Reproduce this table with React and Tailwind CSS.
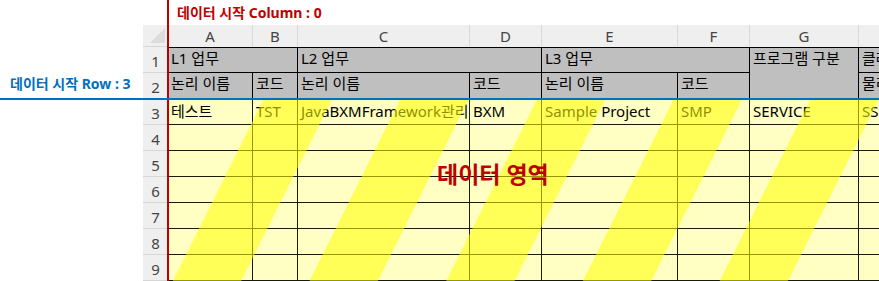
const font = { fontFamily: '"Noto Sans", "Noto Sans CJK KR", sans-serif' };

const letters = ["A", "B", "C", "D", "E", "F", "G", "H"];
const letterCols = [
  "col-start-3",
  "col-start-4",
  "col-start-5",
  "col-start-6",
  "col-start-7",
  "col-start-8",
  "col-start-9",
  "col-start-10",
];
const rowStarts = [
  "row-start-3",
  "row-start-4",
  "row-start-5",
  "row-start-6",
  "row-start-7",
  "row-start-8",
  "row-start-9",
  "row-start-10",
  "row-start-11",
];

const firstRow = [
  { text: "테스트" },
  { text: "TST" },
  { text: "JavaBXMFramework관리" },
  { text: "BXM" },
  { text: "Sample Project" },
  { text: "SMP" },
  { text: "SERVICE" },
  { text: "SSERVICE" },
];

const head = "bg-[#bfbfbf] border-r border-b border-black text-black px-[3px] leading-[20px] whitespace-nowrap overflow-hidden";

export default function App() {
  // stripes: 5 parallelograms, period 136.7, width 68.3
  const stripes = [0, 1, 2, 3, 4].map((k) => {
    const o = 136.7 * k;
    return `${96.3 + o},0 ${164.6 + o},0 ${74.1 + o},181 ${5.8 + o},181`;
  });

  return (
    <div
      className="relative w-[879px] h-[281px] overflow-hidden bg-white text-[15px]"
      style={font}
    >
      <div className="grid w-max grid-cols-[143px_25px_85px_45px_172px_72px_136px_72px_109px_110px] grid-rows-[25px_22px_repeat(9,26px)]">
        {/* top label */}
        <div className="col-start-3 col-span-8 row-start-1 flex items-center pl-[9px] text-[14px] font-bold text-[#c00000] whitespace-nowrap">
          데이터 시작 Column : 0
        </div>

        {/* left label */}
        <div className="col-start-1 row-start-3 row-span-2 flex items-end pb-[5px] pl-[10px] text-[14px] font-bold text-[#0070c0] whitespace-nowrap">
          데이터 시작 Row : 3
        </div>

        {/* corner */}
        <div className="col-start-2 row-start-2 bg-[#efefef] border-b border-[#d6d6d6] relative">
          <svg className="absolute inset-0" width="25" height="22">
            <polygon points="7,18 22,3 22,18" fill="#dcdcdc" />
          </svg>
        </div>

        {/* column letters */}
        {letters.map((l, i) => (
          <div
            key={l}
            className={`${letterCols[i]} row-start-2 bg-[#efefef] border-r border-[#d9d9d9] text-center text-[#444] leading-[22px]`}
          >
            {l}
          </div>
        ))}

        {/* row numbers */}
        {rowStarts.map((r, i) => (
          <div
            key={r}
            className={`col-start-2 ${r} bg-[#efefef] border-b border-[#d6d6d6] text-center text-[#444] leading-[26px] pt-[1px]`}
          >
            {i + 1}
          </div>
        ))}

        {/* header row 1 */}
        <div className={`col-start-3 col-span-2 row-start-3 border-t ${head}`}>L1 업무</div>
        <div className={`col-start-5 col-span-2 row-start-3 border-t ${head}`}>L2 업무</div>
        <div className={`col-start-7 col-span-2 row-start-3 border-t ${head}`}>L3 업무</div>
        <div className={`col-start-9 row-start-3 row-span-2 border-t ${head}`}>프로그램 구분</div>
        <div className={`col-start-10 row-start-3 border-t ${head}`}>클래스 구분</div>

        {/* header row 2 */}
        <div className={`col-start-3 row-start-4 ${head}`}>논리 이름</div>
        <div className={`col-start-4 row-start-4 ${head}`}>코드</div>
        <div className={`col-start-5 row-start-4 ${head}`}>논리 이름</div>
        <div className={`col-start-6 row-start-4 ${head}`}>코드</div>
        <div className={`col-start-7 row-start-4 ${head}`}>논리 이름</div>
        <div className={`col-start-8 row-start-4 ${head}`}>코드</div>
        <div className={`col-start-10 row-start-4 ${head}`}>물리 이름</div>

        {/* data rows */}
        {rowStarts.slice(2).map((r, ri) =>
          letterCols.map((c, ci) => (
            <div
              key={r + c}
              className={`${c} ${r} bg-[#ffffc4] border-r border-b border-[#1a1a00] px-[3px] leading-[20px] pt-[2px] whitespace-nowrap overflow-hidden text-black`}
            >
              {ri === 0 ? firstRow[ci].text : ""}
            </div>
          ))
        )}
      </div>

      {/* stripes over the data area */}
      <svg
        className="absolute left-[167px] top-[100px]"
        width="712"
        height="181"
      >
        {stripes.map((p, i) => (
          <polygon key={i} points={p} fill="#ffff00" fillOpacity="0.55" />
        ))}
      </svg>

      <div className="absolute left-[437px] top-[159px] text-[23px] font-bold text-[#c00000] leading-[30px] whitespace-nowrap">
        데이터 영역
      </div>

      <div className="absolute left-[167px] top-0 w-[2px] h-[281px] bg-[#c00000]" />
      <div className="absolute left-0 top-[98px] w-[879px] h-[2px] bg-[#0070c0]" />
    </div>
  );
}
